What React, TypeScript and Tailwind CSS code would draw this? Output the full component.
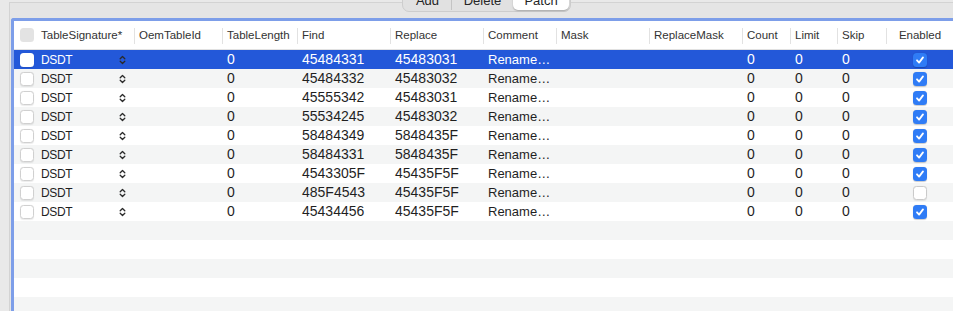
import React from "react";

const COLS = [
  "w-[23px]",
  "w-[98px]",
  "w-[88px]",
  "w-[75px]",
  "w-[93px]",
  "w-[93px]",
  "w-[73px]",
  "w-[93px]",
  "w-[93px]",
  "w-[48px]",
  "w-[47px]",
  "w-[49px]",
  "w-[66px]",
];

const HEADERS = [
  "",
  "TableSignature*",
  "OemTableId",
  "TableLength",
  "Find",
  "Replace",
  "Comment",
  "Mask",
  "ReplaceMask",
  "Count",
  "Limit",
  "Skip",
  "Enabled",
];

const ROWS: [string, string, boolean][] = [
  ["45484331", "45483031", true],
  ["45484332", "45483032", true],
  ["45555342", "45483031", true],
  ["55534245", "45483032", true],
  ["58484349", "5848435F", true],
  ["58484331", "5848435F", true],
  ["4543305F", "45435F5F", true],
  ["485F4543", "45435F5F", false],
  ["45434456", "45435F5F", true],
];

function Chevrons() {
  return (
    <svg width="7" height="10" viewBox="0 0 7 10" fill="none">
      <path d="M1.2 3.8 L3.5 1.5 L5.8 3.8" stroke="#2a2a2a" strokeWidth="1.3" strokeLinecap="round" strokeLinejoin="round" />
      <path d="M1.2 6.2 L3.5 8.5 L5.8 6.2" stroke="#2a2a2a" strokeWidth="1.3" strokeLinecap="round" strokeLinejoin="round" />
    </svg>
  );
}

function CheckBox({ checked }: { checked: boolean }) {
  if (checked) {
    return (
      <div className="w-[14px] h-[14px] rounded-[3.5px] bg-[#2f7cf6] flex items-center justify-center shadow-[0_0.5px_1px_rgba(0,0,0,0.2)]">
        <svg width="10" height="10" viewBox="0 0 10 10" fill="none">
          <path d="M2 5.3 L4.1 7.6 L8 2.4" stroke="white" strokeWidth="1.8" strokeLinecap="round" strokeLinejoin="round" />
        </svg>
      </div>
    );
  }
  return (
    <div className="w-[14px] h-[14px] rounded-[3.5px] bg-white border border-[#cacaca] shadow-[0_0.5px_1px_rgba(0,0,0,0.08)]" />
  );
}

function HeaderCell({ i }: { i: number }) {
  const w = COLS[i];
  if (i === 0) {
    return (
      <div className={`${w} h-full flex items-center pl-[6px] shrink-0`}>
        <div className="w-[14px] h-[14px] rounded-[3.5px] bg-[#e3e3e3]" />
      </div>
    );
  }
  if (i === 12) {
    return (
      <div className={`${w} h-full flex items-center justify-center shrink-0`}>
        <span className="pt-[2px]">{HEADERS[i]}</span>
      </div>
    );
  }
  return (
    <div className={`${w} h-full flex items-center justify-between pl-[4px] shrink-0`}>
      <span className="whitespace-nowrap pt-[2px]">{HEADERS[i]}</span>
      <div className="w-px h-[16px] mt-[2px] bg-[#e2e2e2]" />
    </div>
  );
}

function DataRow({ idx, row }: { idx: number; row: [string, string, boolean] }) {
  const selected = idx === 0;
  const bg = selected ? "bg-[#2358d9]" : idx % 2 === 1 ? "bg-[#f4f5f5]" : "bg-white";
  const txt = selected ? "text-white" : "text-[#1f1f1f]";
  const num = "text-[14px] pl-[4px] shrink-0 whitespace-nowrap";
  return (
    <div className={`flex h-[19px] items-center ${bg} ${txt}`}>
      <div className={`${COLS[0]} flex items-center pl-[6px] shrink-0`}>
        <div className={`w-[14px] h-[14px] rounded-[3.5px] bg-white ${selected ? "" : "border border-[#d0d0d0]"} shadow-[0_0.5px_1px_rgba(0,0,0,0.08)]`} />
      </div>
      <div className={`${COLS[1]} flex items-center justify-between pl-[4px] pr-[9px] shrink-0`}>
        <span className="text-[12px] tracking-[-0.03em]">DSDT</span>
        <Chevrons />
      </div>
      <div className={`${COLS[2]} shrink-0`} />
      <div className={`${COLS[3]} ${num}`}>0</div>
      <div className={`${COLS[4]} ${num}`}>{row[0]}</div>
      <div className={`${COLS[5]} ${num}`}>{row[1]}</div>
      <div className={`${COLS[6]} text-[13px] pl-[4px] shrink-0 whitespace-nowrap`}>Rename…</div>
      <div className={`${COLS[7]} shrink-0`} />
      <div className={`${COLS[8]} shrink-0`} />
      <div className={`${COLS[9]} ${num}`}>0</div>
      <div className={`${COLS[10]} ${num}`}>0</div>
      <div className={`${COLS[11]} ${num}`}>0</div>
      <div className={`${COLS[12]} flex items-center justify-center shrink-0`}>
        <CheckBox checked={row[2]} />
      </div>
    </div>
  );
}

export default function App() {
  const empties = [9, 10, 11, 12, 13];
  return (
    <div className="w-[953px] h-[311px] overflow-hidden bg-[#e9e9e9] font-['Liberation_Sans',Arial,sans-serif] relative">
      <div className="ml-[9px] mt-[2px] h-[320px] border-l border-t border-[#d3d3d3] bg-[#e5e5e5] pl-[1px] pt-[15px] relative">
        <div className="border-l-[3px] border-t-[3px] border-[#7d9ee9] rounded-tl-[3px] bg-white h-[300px] overflow-hidden">
          <div className="flex h-[29px] border-b border-[#e1e1e1] text-[11.5px] text-[#333333] bg-white">
            {HEADERS.map((_, i) => (
              <HeaderCell key={i} i={i} />
            ))}
          </div>
          {ROWS.map((r, i) => (
            <DataRow key={i} idx={i} row={r} />
          ))}
          {empties.map((i) => (
            <div key={i} className={`h-[19px] ${i % 2 === 1 ? "bg-[#f4f5f5]" : "bg-white"}`} />
          ))}
        </div>
      </div>
      <div className="absolute left-[402px] top-[-10px] h-[22px] w-[169px] rounded-[7px] bg-[#e1e1e1] border border-[#cdcdcd] flex items-center text-[13px] text-[#262626] p-[1px]">
        <div className="w-[47px] h-full flex items-center justify-center">Add</div>
        <div className="w-px h-[12px] bg-[#c4c4c4] mt-[6px]" />
        <div className="w-[61px] h-full flex items-center justify-center">Delete</div>
        <div className="flex-1 h-full flex items-center justify-center bg-white rounded-[5px] shadow-[0_0.5px_1.5px_rgba(0,0,0,0.25)]">Patch</div>
      </div>
    </div>
  );
}
